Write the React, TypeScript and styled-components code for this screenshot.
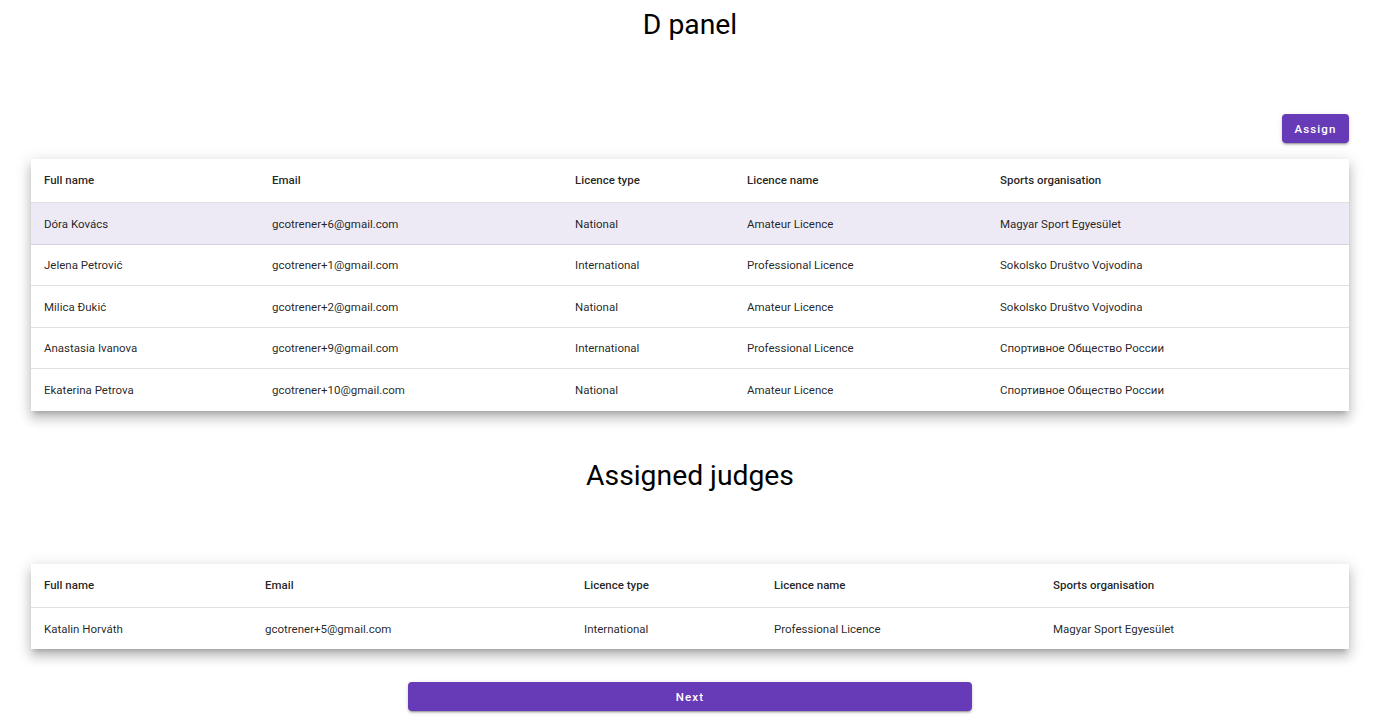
import React from "react";
import styled, { createGlobalStyle } from "styled-components";

const GlobalStyle = createGlobalStyle`
  html, body { margin: 0; padding: 0; background: #fff; }
  body { font-family: Roboto, "Noto Sans", sans-serif; color: rgba(0,0,0,0.87); }
`;

const Page = styled.div`
  display: flex;
  flex-direction: column;
  padding: 0 27px 10px 31px;
`;

const Title = styled.h1<{ $top: number; $bottom: number }>`
  margin: ${(p) => p.$top}px 0 ${(p) => p.$bottom}px;
  font-size: 28.3px;
  line-height: 32px;
  font-weight: 400;
  text-align: center;
  color: #000;
`;

const ActionRow = styled.div`
  display: flex;
  justify-content: flex-end;
  margin-bottom: 16px;
`;

const Button = styled.button<{ $wide?: boolean }>`
  height: 29px;
  width: ${(p) => (p.$wide ? "564px" : "67px")};
  border: none;
  border-radius: 4px;
  background: #673ab7;
  color: #fff;
  font-family: Roboto, sans-serif;
  font-size: 11.5px;
  font-weight: 500;
  letter-spacing: 1.1px;
  box-shadow: 0 3px 1px -2px rgba(0,0,0,.2), 0 2px 2px 0 rgba(0,0,0,.14), 0 1px 5px 0 rgba(0,0,0,.12);
  cursor: pointer;
  padding: 0;
`;

const Footer = styled.div`
  display: flex;
  justify-content: center;
  margin-top: 33px;
`;

const Table = styled.div`
  background: #fff;
  box-shadow: 0 5px 5px -3px rgba(0,0,0,.2), 0 8px 10px 1px rgba(0,0,0,.14), 0 3px 14px 2px rgba(0,0,0,.12);
`;

const Row = styled.div<{ $cols: string; $head?: boolean; $selected?: boolean; $last?: boolean }>`
  display: grid;
  grid-template-columns: ${(p) => p.$cols};
  align-items: center;
  height: ${(p) => (p.$head ? 44 : 41.5)}px;
  padding: ${(p) => (p.$head ? "0 0 1px 13px" : "1px 0 0 13px")};
  box-sizing: border-box;
  background: ${(p) => (p.$selected ? "#ede9f5" : "#fff")};
  border-bottom: ${(p) => (p.$last ? "none" : p.$selected ? "1px solid #d5d0de" : "1px solid #e0e0e0")};
  font-size: 11.5px;
  font-weight: ${(p) => (p.$head ? 500 : 400)};
  color: rgba(0,0,0,0.87);
`;

const Cell = styled.div`
  white-space: nowrap;
  overflow: hidden;
`;

type Person = [string, string, string, string, string];

const headers: Person = ["Full name", "Email", "Licence type", "Licence name", "Sports organisation"];

const available: Person[] = [
  ["Dóra Kovács", "gcotrener+6@gmail.com", "National", "Amateur Licence", "Magyar Sport Egyesület"],
  ["Jelena Petrović", "gcotrener+1@gmail.com", "International", "Professional Licence", "Sokolsko Društvo Vojvodina"],
  ["Milica Đukić", "gcotrener+2@gmail.com", "National", "Amateur Licence", "Sokolsko Društvo Vojvodina"],
  ["Anastasia Ivanova", "gcotrener+9@gmail.com", "International", "Professional Licence", "Спортивное Общество России"],
  ["Ekaterina Petrova", "gcotrener+10@gmail.com", "National", "Amateur Licence", "Спортивное Общество России"],
];

const assigned: Person[] = [
  ["Katalin Horváth", "gcotrener+5@gmail.com", "International", "Professional Licence", "Magyar Sport Egyesület"],
];

function DataTable({ cols, rows, selected }: { cols: string; rows: Person[]; selected?: number }) {
  return (
    <Table>
      <Row $cols={cols} $head>
        {headers.map((h) => (
          <Cell key={h}>{h}</Cell>
        ))}
      </Row>
      {rows.map((r, i) => (
        <Row key={i} $cols={cols} $selected={i === selected} $last={i === rows.length - 1}>
          {r.map((c, j) => (
            <Cell key={j}>{c}</Cell>
          ))}
        </Row>
      ))}
    </Table>
  );
}

export default function App() {
  return (
    <>
      <GlobalStyle />
      <Page>
        <Title $top={9} $bottom={73}>D panel</Title>
        <ActionRow>
          <Button>Assign</Button>
        </ActionRow>
        <DataTable cols="228px 303px 172px 253px 1fr" rows={available} selected={0} />
        <Title $top={49} $bottom={72}>Assigned judges</Title>
        <DataTable cols="221px 319px 190px 279px 1fr" rows={assigned} />
        <Footer>
          <Button $wide>Next</Button>
        </Footer>
      </Page>
    </>
  );
}
